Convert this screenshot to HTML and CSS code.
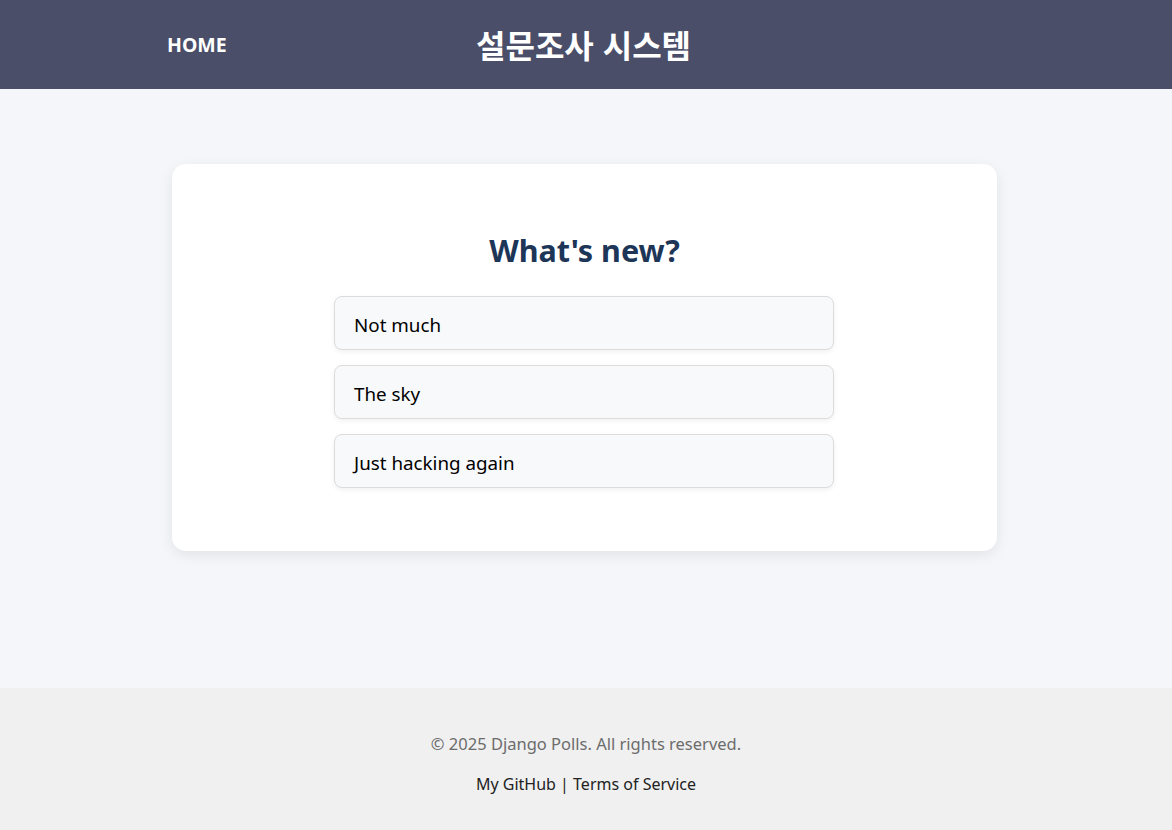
FILE: index.html
```html
<!DOCTYPE html>
<html lang="ko">
<head>
<meta charset="utf-8">
<title>설문조사 시스템</title>
<link rel="stylesheet" href="styles.css">
</head>
<body>
<header class="topbar">
  <a class="home" href="#">HOME</a>
  <h1 class="site-title">설문조사 시스템</h1>
</header>
<main class="main">
  <section class="card">
    <h2 class="question">What's new?</h2>
    <ul class="choices">
      <li class="choice">Not much</li>
      <li class="choice">The sky</li>
      <li class="choice">Just hacking again</li>
    </ul>
  </section>
</main>
<footer class="footer">
  <p class="copy">© 2025 Django Polls. All rights reserved.</p>
  <p class="links"><a href="#">My GitHub</a> | <a href="#">Terms of Service</a></p>
</footer>
</body>
</html>
```
FILE: styles.css
```css
* { box-sizing: border-box; }
html, body { margin: 0; padding: 0; }
body {
  font-family: "Noto Sans", "Noto Sans CJK KR", sans-serif;
  background: #f5f6f9;
  color: #111;
}
.topbar {
  height: 89px;
  background: #4a4e69;
  display: flex;
  align-items: center;
  padding-left: 167px;
}
.home {
  color: #fff;
  text-decoration: none;
  font-weight: 700;
  font-size: 19.5px;
  width: 309px;
  margin-bottom: 1px;
}
.site-title {
  margin: 0 0 2px;
  color: #fff;
  font-size: 32px;
  font-weight: 700;
  font-family: "Noto Sans CJK KR", sans-serif;
}
.main {
  height: 599px;
  padding-top: 75px;
}
.card {
  width: 825px;
  margin-left: 172px;
  background: #fff;
  border-radius: 14px;
  box-shadow: 0 4px 14px rgba(0,0,0,0.08);
  padding: 64px 0 63px;
  display: flex;
  flex-direction: column;
  align-items: center;
}
.question {
  margin: 0 0 24px;
  color: #1d3557;
  font-size: 30.5px;
  font-weight: 700;
  line-height: 44px;
}
.choices {
  list-style: none;
  margin: 0 1px 0 0;
  padding: 0;
  width: 500px;
  display: flex;
  flex-direction: column;
  gap: 15px;
}
.choice {
  height: 54px;
  display: flex;
  align-items: center;
  padding: 4px 19px 0;
  background: #f8f9fa;
  border: 1px solid #dcdcdc;
  border-radius: 8px;
  box-shadow: 0 2px 5px rgba(0,0,0,0.06);
  font-size: 18.8px;
  color: #000;
}
.footer {
  height: 142px;
  background: #f0f0f0;
  text-align: center;
  padding-top: 44px;
}
.copy {
  margin: 0 0 16px;
  color: #6c6c6c;
  font-size: 16.5px;
  line-height: 24px;
}
.links {
  margin: 0;
  font-size: 16px;
  line-height: 24px;
  color: #222;
}
.links a { color: #222; text-decoration: none; }
```
